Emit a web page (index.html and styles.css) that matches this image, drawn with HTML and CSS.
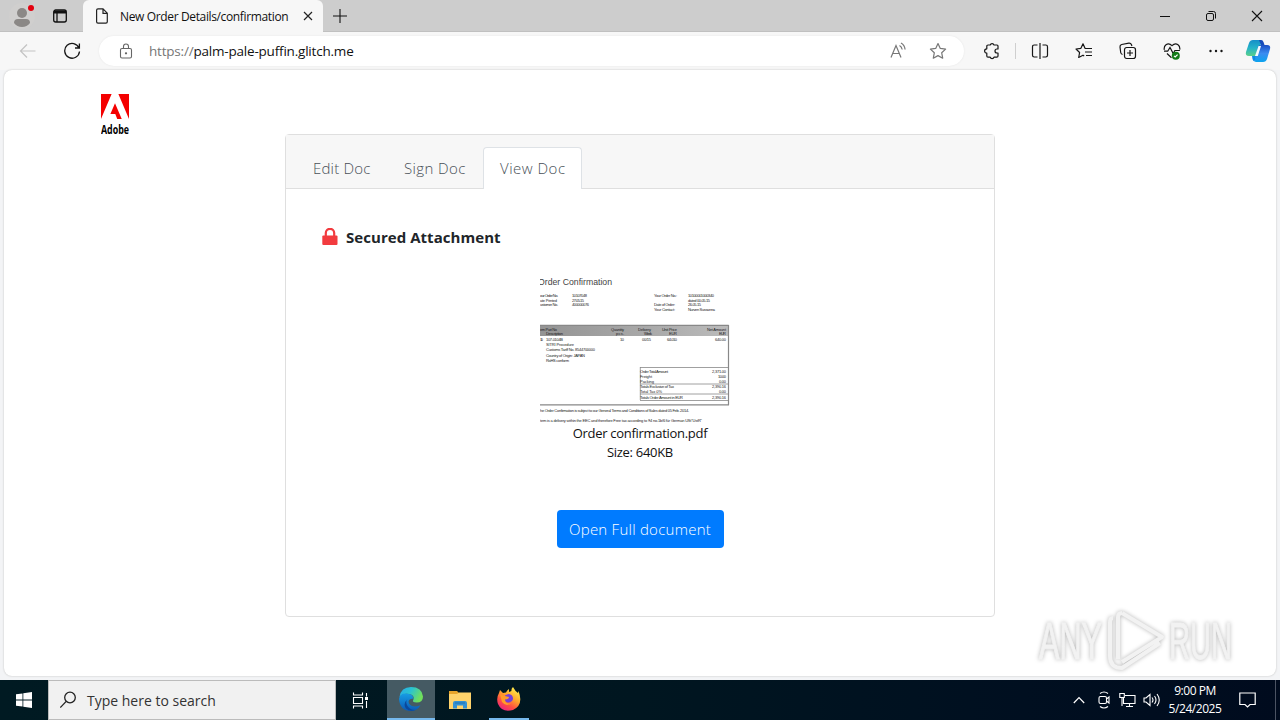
FILE: index.html
```html
<!DOCTYPE html>
<html lang="en">
<head>
<meta charset="utf-8">
<title>New Order Details/confirmation</title>
<link rel="stylesheet" href="styles.css">
</head>
<body>

<div class="tabstrip">
  <div class="profile">
    <svg width="44" height="32" viewBox="0 0 44 32"><circle cx="22" cy="16" r="13" fill="#d0cfce"/><circle cx="22" cy="13" r="5" fill="#8b8886"/><path d="M14 23q0-4 4-4h8q4 0 4 4q-3 4-8 4t-8-4z" fill="#8b8886"/><circle cx="31" cy="8" r="3" fill="#e3000f"/></svg>
  </div>
  <div class="workspace">
    <svg width="16" height="16" viewBox="0 0 16 16" fill="none" stroke="#111" stroke-width="1.3"><rect x="1.7" y="2" width="12.6" height="12" rx="2"/><path d="M2 4h12" stroke-width="3"/><path d="M5 5v9"/></svg>
  </div>
  <div class="tab">
    <svg width="14" height="16" viewBox="0 0 14 16" fill="none" stroke="#222" stroke-width="1.2"><path d="M3 .8h5l4.3 4.4v8.6q0 1.4-1.4 1.4H3q-1.4 0-1.4-1.4V2.2Q1.6 .8 3 .8zM8 1v4.3h4.3"/></svg>
    <span class="tabtitle">New Order Details/confirmation</span>
    <svg class="tabclose" width="10" height="10" viewBox="0 0 10 10" stroke="#222" stroke-width="1.2"><path d="M1 1l8 8M9 1l-8 8"/></svg>
  </div>
  <svg class="newtab" width="14" height="14" viewBox="0 0 14 14" stroke="#111" stroke-width="1.1"><path d="M7 0v14M0 7h14"/></svg>
  <div class="winbuttons">
    <svg width="46" height="32" viewBox="0 0 46 32" stroke="#111"><path d="M18 16.5h10"/></svg>
    <svg width="46" height="32" viewBox="0 0 46 32" fill="none" stroke="#111"><rect x="18.5" y="13.5" width="7" height="7" rx="1.5"/><path d="M20.5 11.5h5q2 0 2 2v5"/></svg>
    <svg width="46" height="32" viewBox="0 0 46 32" stroke="#111" stroke-width="1.1"><path d="M18 11l10 10M28 11l-10 10"/></svg>
  </div>
</div>

<div class="toolbar">
  <svg class="back" width="18" height="16" viewBox="0 0 18 16" fill="none" stroke="#c3c3c3" stroke-width="1.2"><path d="M16.5 8H1.5M8 1.5L1.5 8L8 14.5"/></svg>
  <svg class="reload" width="18" height="18" viewBox="0 0 18 18" fill="none" stroke="#161616" stroke-width="1.3"><path d="M16 6A7.4 7.4 0 1 0 16.5 9.5M16.4 1.5V6H12"/></svg>
  <div class="address">
    <svg class="padlock" width="14" height="16" viewBox="0 0 14 16" fill="none" stroke="#666" stroke-width="1.1"><rect x="1.5" y="5.5" width="11" height="9.5" rx="1.5"/><path d="M4.5 5.5V3.5a2.5 2.5 0 0 1 5 0v2"/><circle cx="7" cy="10.3" r=".6" fill="#666"/></svg>
    <span class="url"><span class="scheme">https://</span>palm-pale-puffin.glitch.me</span>
    <svg class="readaloud" width="18" height="18" viewBox="0 0 18 18" fill="none" stroke="#777" stroke-width="1.2"><path d="M2 15.5L7 3.5L12 15.5M3.8 11.5h6.5M10.5 3.5q2.2 1.2 2.7 4M12 1q3.6 2 4.1 6.5"/></svg>
    <svg class="star" width="18" height="18" viewBox="0 0 18 18" fill="none" stroke="#777" stroke-width="1.2" stroke-linejoin="round"><path d="M9 1.5l2.3 4.9 5.3.7-3.9 3.7 1 5.4L9 13.6l-4.7 2.6 1-5.4L1.4 7.100l5.3-.7z"/></svg>
  </div>
  <div class="tool ext"><svg width="18" height="18" viewBox="0 0 18 18" fill="none" stroke="#161616" stroke-width="1.2" stroke-linejoin="round"><path d="M5 3h2.200a2 2 0 0 1 3.800 0h3q1 0 1 1v3h-1a2 2 0 0 0 0 4h1v3q0 1.200-1.200 1.200H11a2 2 0 0 1-3.800 0H5q-1.200 0-1.200-1.200v-2.800a2.200 2.200 0 0 1 0-4.400V4.200Q3.800 3 5 3z"/></svg></div>
  <div class="separator"></div>
  <div class="tool"><svg width="18" height="18" viewBox="0 0 18 18" fill="none" stroke="#161616" stroke-width="1.2"><path d="M9 1v16M6.500 3H3.200q-1.700 0-1.700 1.700v8.600q0 1.700 1.700 1.700h3.300M11.500 3h3.300q1.700 0 1.700 1.700v8.600q0 1.700-1.700 1.700h-3.300"/></svg></div>
  <div class="tool"><svg width="18" height="18" viewBox="0 0 18 18" fill="none" stroke="#161616" stroke-width="1.2" stroke-linejoin="round"><path d="M12.500 6.500L10 6.300 8 1.800 5.900 6.300 1 7l3.600 3.500-.9 5L8 13.200l1.200.8M10 6.500h7M10 10h7M11 13.500h6"/></svg></div>
  <div class="tool"><svg width="18" height="18" viewBox="0 0 18 18" fill="none" stroke="#161616" stroke-width="1.2"><rect x="5.500" y="5.500" width="11" height="11" rx="2.200"/><path d="M11 8v6M8 11h6M3.500 12.500Q2 12 1.700 10.500L1 5q-.2-2 1.700-2.500L9.800 1.200q2-.2 2.700 1.500l.4 1.300"/></svg></div>
  <div class="tool"><svg width="18" height="18" viewBox="0 0 18 18" fill="none" stroke="#161616" stroke-width="1.2"><path d="M1.300 7.800Q.7 4.500 3 2.700q3-2 6 1 3-3 6-1 2.300 1.800 1.700 5M1 9.200h3.700L7 5.500l3.200 6 1.700-3h5M4 11.500l4.500 4.200"/><circle cx="12.800" cy="13.700" r="4" fill="#137b18" stroke="none"/><path d="M11 13.800l1.200 1.200 2.400-2.400" stroke="#fff"/></svg></div>
  <div class="tool"><svg width="16" height="4" viewBox="0 0 16 4" fill="#161616"><circle cx="2.500" cy="2" r="1.200"/><circle cx="8" cy="2" r="1.200"/><circle cx="13.500" cy="2" r="1.200"/></svg></div>
  <div class="copilot">
    <svg width="26" height="24" viewBox="0 0 26 24">
      <defs>
        <linearGradient id="cpa" x1="0" y1="0" x2="0" y2="1"><stop offset="0" stop-color="#168ec8"/><stop offset=".5" stop-color="#25b3c9"/><stop offset="1" stop-color="#5bd08a"/></linearGradient>
        <linearGradient id="cpb" x1="0" y1="0" x2="0" y2="1"><stop offset="0" stop-color="#1b4fc4"/><stop offset=".5" stop-color="#3b8cf0"/><stop offset="1" stop-color="#0ba4ee"/></linearGradient>
      </defs>
      <path d="M8 1h7q2 0 1.500 2L13 15q-.8 2-3 2H4q-4 0-3-4L4 4q1-3 4-3z" fill="url(#cpa)"/>
      <path d="M14 1h2q2 0 2.600 2.200L19.500 6H16z" fill="#174ab9"/>
      <path d="M18 23h-7q-2 0-1.500-2L13 8q.8-2 3-2h6q4 0 3 4l-3 10q-1 3-4 3z" fill="url(#cpb)"/>
      <path d="M13.500 7H16l-3.200 10H10z" fill="#f6fbff"/>
      <path d="M7 17h4l-1.500 5.600Q8 22.400 7.500 20z" fill="#0d8be5"/>
    </svg>
  </div>
</div>

<div class="page">
  <div class="logo">
    <svg width="28" height="26" viewBox="0 0 29 27" preserveAspectRatio="none" fill="#f40000"><path d="M0 0h11L0 26zM18 0h11v26zM14.500 9.500L21.500 26h-4.700l-2-5.200H9.700z"/></svg>
    <svg width="30" height="20" viewBox="0 0 30 20"><text class="logotext" x="0" y="13.500" textLength="28" lengthAdjust="spacingAndGlyphs">Adobe</text></svg>
  </div>

  <div class="card">
    <div class="cardheader">
      <a class="navlink edit">Edit Doc</a>
      <a class="navlink sign">Sign Doc</a>
      <a class="navlink active">View Doc</a>
    </div>
    <div class="cardbody">
      <div class="secured">
        <svg width="16" height="18" viewBox="0 0 16 18"><path d="M3.800 8V5a4.200 4.200 0 0 1 8.400 0v3" fill="none" stroke="#f23b3f" stroke-width="2.200"/><rect x=".3" y="7.500" width="15.200" height="9.500" rx="1" fill="#f23b3f"/></svg>
        <b>Secured Attachment</b>
      </div>
      <svg class="preview" width="200" height="150" viewBox="540 275 200 150">
        <defs><linearGradient id="bar" x1="0" y1="0" x2="1" y2="0"><stop offset="0" stop-color="#939393"/><stop offset=".6" stop-color="#aaa"/><stop offset="1" stop-color="#bbb"/></linearGradient></defs>
        <text class="doctitle" x="538" y="285" textLength="74" lengthAdjust="spacingAndGlyphs">Order Confirmation</text>
        <g class="doc">
          <text x="540" y="297.300" textLength="18">our Order No.</text><text x="572" y="297.300" textLength="15">10107048</text>
          <text x="540" y="301.800" textLength="17">ate Printed</text><text x="572" y="301.800" textLength="12">27.05.15</text>
          <text x="540" y="306.300" textLength="18">ustomer No.</text><text x="572" y="306.300" textLength="17">400000076</text>
          <text x="654" y="297.300" textLength="23">Your Order No.:</text><text x="688" y="297.300" textLength="26">10100001000340</text>
          <text x="688" y="301.800" textLength="22">dated 00.05.15</text>
          <text x="654" y="306.300" textLength="21">Date of Order:</text><text x="688" y="306.300" textLength="13">26.05.15</text>
          <text x="654" y="311" textLength="21">Your Contact:</text><text x="688" y="311" textLength="27">Nurven Sussanna</text>
          <rect x="538" y="325" width="190.500" height="11" fill="url(#bar)"/>
          <path d="M538 325.300h190.700M728.500 325v80M538 404.800h191" fill="none" stroke="#888" stroke-width="1.200"/>
          <text x="540" y="330.500" textLength="17">em Part No</text><text x="611" y="330.500" textLength="13">Quantity</text><text x="638" y="330.500" textLength="13">Delivery</text><text x="662" y="330.500" textLength="15">Unit Price</text><text x="707" y="330.500" textLength="19">Net Amount</text>
          <text x="546" y="335.300" textLength="17">Description</text><text x="616" y="335.300" textLength="8">pcs.</text><text x="644" y="335.300" textLength="8">Week</text><text x="669" y="335.300" textLength="8">EUR</text><text x="719" y="335.300" textLength="7">EUR</text>
          <text x="540" y="341" textLength="3">10</text><text x="546" y="341" textLength="17">107-0104B</text><text x="620" y="341" textLength="4">10</text><text x="642" y="341" textLength="9">00/15</text><text x="667" y="341" textLength="10">64.010</text><text x="715" y="341" textLength="11">640.00</text>
          <text x="546" y="346.300" textLength="28">SITRI Procedure</text>
          <text x="546" y="351.300" textLength="49">Customs Tariff No. 8544700000</text>
          <text x="546" y="356.600" textLength="39">Country of Origin: JAPAN</text>
          <text x="546" y="361.500" textLength="23">RoHS conform</text>
          <path d="M640 367.500h88M640 384h88M640 394h88M640 400.500h88M640.300 367v33" fill="none" stroke="#888" stroke-width=".8"/>
          <text x="640" y="372.500" textLength="28">Order Total Amount</text><text x="712" y="372.500" textLength="14">2,371.00</text>
          <text x="640" y="377.800" textLength="12">Freight</text><text x="718" y="377.800" textLength="8">10.00</text>
          <text x="640" y="382.600" textLength="14">Packing</text><text x="719" y="382.600" textLength="7">0.00</text>
          <text x="640" y="388" textLength="34">Totals Exclusive of Tax</text><text x="712" y="388" textLength="14">2,390.16</text>
          <text x="640" y="393" textLength="22">Total Tax 0%</text><text x="719" y="393" textLength="7">0.00</text>
          <text x="640" y="398.800" textLength="43">Totals Order Amount in EUR</text><text x="712" y="398.800" textLength="14">2,390.16</text>
          <text x="540" y="411.700" textLength="149">he Order Confirmation is subject to our General Terms and Conditions of Sales dated 05 Feb. 2014.</text>
          <text x="540" y="421.500" textLength="162">tem is a delivery within the EEC and therefore Free tax according to §4 no.1b/6 für German USt"UstR"</text>
        </g>
      </svg>
      <div class="filename">Order confirmation.pdf</div>
      <div class="filesize">Size: 640KB</div>
      <a class="btn"><span>Open Full document</span></a>
    </div>
  </div>

  <svg class="watermark" width="210" height="72" viewBox="1030 605 210 72">
    <g class="marktext"><text x="1039" y="659" textLength="63" lengthAdjust="spacingAndGlyphs">ANY</text><text x="1169" y="659" textLength="63" lengthAdjust="spacingAndGlyphs">RUN</text></g>
    <g class="markplay"><path d="M1122 613L1162 637L1122 662M1122 613q-4 0-4 4v42M1113 618q-3 0-3 4v34q0 12 12 12l38-25"/></g>
  </svg>
</div>

<div class="taskbar">
  <div class="start"><svg width="16" height="16" viewBox="0 0 16 16" fill="#fff"><path d="M0 2.300L6.500 1.400v6.200H0zM7.300 1.300L16 0v7.600H7.300zM0 8.400h6.500v6.200L0 13.700zM7.300 8.400H16V16l-8.700-1.300z"/></svg></div>
  <div class="search">
    <svg width="17" height="18" viewBox="0 0 17 18" fill="none" stroke="#222" stroke-width="1.3"><circle cx="10" cy="6.500" r="5.300"/><path d="M6.200 10.400L.3 16.500"/></svg>
    <span>Type here to search</span>
  </div>
  <div class="app taskview"><svg width="17" height="17" viewBox="0 0 17 17" fill="none" stroke="#fff" stroke-width="1.1"><path d="M1.500.5v2.500h9V.5M1.500 16.500V14h9v2.500M1.500 5.500h9v6h-9zM14.500 1v3.500M14.500 9v7"/><path d="M13 5h3v3h-3z" fill="#fff" stroke="none"/></svg></div>
  <div class="app current">
    <svg width="24" height="24" viewBox="0 0 24 24">
      <defs>
        <linearGradient id="ea" x1="0" y1="0" x2="1" y2=".4"><stop offset="0" stop-color="#28a9e8"/><stop offset=".5" stop-color="#2ac3d1"/><stop offset="1" stop-color="#70df5c"/></linearGradient>
        <linearGradient id="eb" x1="0" y1="0" x2="0" y2="1"><stop offset="0" stop-color="#179de4"/><stop offset="1" stop-color="#0b59b5"/></linearGradient>
      </defs>
      <path d="M.5 10Q2 0 12 0q11 0 12 9.500 0 6-6.300 6-5.200 0-3.300-2.700Q16 8 10 7Q4 6 .5 10z" fill="url(#ea)"/>
      <path d="M0 12Q1 6 7 6.500q7 .2 7.500 5Q8 12 10 16.500q3.500 5 11.500 1.700Q18 24 12 24 1 24 0 12z" fill="url(#eb)"/>
      <path d="M8.500 12Q6 15 8.500 19q3 4.500 8 4Q11 25 7 21.500 3.500 17 8.500 12z" fill="#0b489b"/>
    </svg>
  </div>
  <div class="app files">
    <svg width="22" height="20" viewBox="0 0 22 20"><path d="M0 1h8l2 2h11v16H0z" fill="#e8a52b"/><path d="M0 4h8l2-1.500h12V19H0z" fill="#ffd36b"/><path d="M4 18.500V13q0-2 2-2h10q2 0 2 2v5.500h-4v-3H8v3z" fill="#3592d4"/><path d="M6 13h10" stroke="#2272b0"/></svg>
  </div>
  <div class="app running">
    <svg width="24" height="24" viewBox="0 0 24 24">
      <defs><linearGradient id="fx" x1=".8" y1="0" x2=".2" y2="1"><stop offset="0" stop-color="#fff34f"/><stop offset=".4" stop-color="#ffa72b"/><stop offset=".7" stop-color="#ff4e42"/><stop offset="1" stop-color="#e81d88"/></linearGradient></defs>
      <path d="M2 6l1-3 3 3 3-.5Q10 3 12 2v3l2.500-1Q14 2 16 0q2 4 5 6l.5-2Q27 18 16 23 5 26 1 17-1 11 2 6z" fill="url(#fx)"/>
      <path d="M8 8.500q4-3 7 0 2 3 0 5.500-4 3-7 0z" fill="#7440d8"/><path d="M3 7l5 2 4 1q0 2-4 2.500Q8 17 14 16.500 9 20 5 15z" fill="#ff9c29"/>
    </svg>
  </div>
  <div class="tray">
    <svg width="12" height="8" viewBox="0 0 12 8" fill="none" stroke="#fff" stroke-width="1.2"><path d="M.8 7L6 1.500 11.200 7"/></svg>
    <svg class="meet" width="14" height="18" viewBox="0 0 14 18" fill="none" stroke="#fff" stroke-width="1.1"><rect x="2" y="5.500" width="7.500" height="7" rx="1.500"/><path d="M9.500 8l2.500-2v6L9.500 10M3 2.500q4-3 8 0M3 15.500q4 3 8 0"/></svg>
    <svg class="network" width="17" height="16" viewBox="0 0 17 16" fill="none" stroke="#fff" stroke-width="1.1"><path d="M6 3.500h10v8H4.500V6M7 14.500h7M10.500 11.500v3M.8 1.500h4.500v4H.8zM3 5.500V14"/></svg>
    <svg class="volume" width="17" height="16" viewBox="0 0 17 16" fill="none" stroke="#fff" stroke-width="1.1"><path d="M1 6h2l4-3.500v11L3 10H1zM9 5.500q2 2.500 0 5M11.500 4q3 4 0 8M14 2q4.500 6 0 12"/></svg>
    <div class="clock"><span>9:00 PM</span><span class="date">5/24/2025</span></div>
    <svg class="notify" width="17" height="17" viewBox="0 0 17 17" fill="none" stroke="#fff" stroke-width="1.2"><path d="M.8 1h15.400v11.500H11L8.500 15 6 12.500H.8z"/></svg>
    <div class="desktop"></div>
  </div>
</div>

</body>
</html>
```

FILE: styles.css
```css
* {
  box-sizing: border-box;
}

body {
  margin: 0;
  width: 1280px;
  height: 720px;
  overflow: hidden;
  display: flex;
  flex-direction: column;
  background: #f3f4f6;
  font-family: "Open Sans", "Noto Sans", sans-serif;
  color: #111;
}

svg {
  display: block;
  flex: none;
}

/* Browser tabs */
.tabstrip {
  height: 32px;
  display: flex;
  align-items: center;
  background: #cdcdcd;
  border-bottom: 1px solid #c0c0c0;
}

.workspace {
  margin-left: 8px;
  width: 31px;
}

.tab {
  width: 240px;
  height: 32px;
  padding-left: 12px;
  display: flex;
  align-items: center;
  background: #f7f7f7;
  border-radius: 6px 6px 0 0;
  align-self: flex-start;
}

.tabtitle {
  width: 170px;
  margin-left: 11px;
  font-size: 12px;
  letter-spacing: -0.36px;
  white-space: nowrap;
}

.tabclose {
  margin-left: 13px;
}

.newtab {
  margin-left: 10px;
}

.winbuttons {
  margin-left: auto;
  display: flex;
}

/* Address row */
.toolbar {
  height: 38px;
  flex: none;
  display: flex;
  align-items: center;
  background: #f7f7f7;
}

.back {
  margin-left: 19px;
}

.reload {
  margin-left: 26px;
}

.address {
  width: 865px;
  height: 30px;
  margin-left: 18px;
  padding-left: 20px;
  display: flex;
  align-items: center;
  border-radius: 15px;
  background: #fff;
  box-shadow: 0 0 2px #e4e4e4;
}

.url {
  margin-left: 16px;
  width: 740px;
  font-size: 13.5px;
  letter-spacing: -0.2px;
}

.scheme {
  color: #767676;
}

.star {
  margin-left: 22px;
}

.tool {
  width: 44px;
  display: flex;
  justify-content: center;
}

.ext {
  margin-left: 6px;
}

.separator {
  width: 1px;
  height: 16px;
  margin: 0 2px 0 1px;
  background: #cfcfcf;
}

.copilot {
  margin-left: 7px;
}

/* Web page */
.page {
  position: relative;
  width: 1272px;
  height: 606px;
  margin: 0 4px 4px;
  flex: none;
  display: flex;
  align-items: flex-start;
  background: #fff;
  border-radius: 8px;
  box-shadow: 0 0 2px #bbb;
}

.logo {
  width: 30px;
  margin: 24px 0 0 97px;
}

.logotext {
  font: bold 12px "Open Sans", sans-serif;
}

.card {
  width: 710px;
  height: 483px;
  margin: 64px 0 0 154px;
  border: 1px solid #dfdfdf;
  border-radius: 4px;
}

.cardheader {
  height: 54px;
  padding: 12px 0 0 10px;
  display: flex;
  background: #f7f7f7;
  border-bottom: 1px solid #dfdfdf;
}

.navlink {
  height: 42px;
  padding: 8px 0 0 16px;
  border: 1px solid transparent;
  border-bottom: none;
  border-radius: 4px 4px 0 0;
  font-size: 15px;
  font-weight: 300;
  line-height: 24px;
  letter-spacing: 0.2px;
  color: #495057;
  white-space: nowrap;
}

.edit {
  width: 91px;
}

.sign {
  width: 96px;
  letter-spacing: 0.4px;
}

.active {
  width: 99px;
  letter-spacing: 0.5px;
  background: #fff;
  border-color: #dee2e6;
}

.cardbody {
  display: flex;
  flex-direction: column;
  align-items: center;
}

.secured {
  width: 638px;
  height: 24px;
  margin-top: 36px;
  padding-left: 1px;
  display: flex;
  align-items: center;
  gap: 8px;
  font-size: 15px;
  letter-spacing: 0.05px;
  color: #212529;
}

.preview {
  margin-top: 26px;
}

.doctitle {
  font: 9.5px "Liberation Sans", sans-serif;
  fill: #444;
}

.doc text {
  font: 4px "Liberation Sans", sans-serif;
  fill: #222;
}

.filename, .filesize {
  font-size: 13px;
  line-height: 19px;
  letter-spacing: -0.3px;
  white-space: nowrap;
}

.filename {
  margin-top: -1px;
}

.btn {
  width: 167px;
  height: 38px;
  margin-top: 48px;
  display: flex;
  align-items: center;
  justify-content: center;
  border-radius: 4px;
  background: #007bff;
  color: #fff;
  font-size: 15px;
  font-weight: 300;
  letter-spacing: 0.25px;
  white-space: nowrap;
}

/* Overlay mark in the corner of the page */
.watermark {
  position: absolute;
  right: 36px;
  bottom: -1px;
  filter: drop-shadow(0 0 2px #b5b5b5);
}

.marktext {
  font: 52px "Liberation Sans", sans-serif;
  fill: #f2f2f2;
  stroke: #f2f2f2;
  stroke-width: 1;
}

.markplay {
  fill: none;
  stroke: #f2f2f2;
  stroke-width: 4;
  stroke-linejoin: round;
}

/* Windows taskbar */
.taskbar {
  height: 40px;
  flex: none;
  display: flex;
  background: linear-gradient(90deg, #001a22, #001620 50%, #000f20 80%, #000b1e);
  color: #fff;
}

.start {
  width: 48px;
  display: flex;
  align-items: center;
  justify-content: center;
}

.search {
  width: 288px;
  padding-left: 11px;
  display: flex;
  align-items: center;
  gap: 10px;
  background: #f1f1f1;
  border: 1px solid #bbb;
  color: #333;
  font-size: 14px;
}

.app {
  width: 48px;
  display: flex;
  align-items: center;
  justify-content: center;
}

.taskview {
  width: 51px;
  padding-right: 3px;
}

.current {
  background: #455a63;
  border-bottom: 2px solid #76b9ed;
}

.files {
  width: 50px;
}

.running {
  width: 40px;
  margin-left: 4px;
  border-bottom: 2px solid #76b9ed;
}

.tray {
  width: 207px;
  margin-left: auto;
  display: flex;
  align-items: center;
}

.meet {
  margin-left: 12px;
}

.network {
  margin-left: 8px;
}

.volume {
  margin-left: 7px;
}

.clock {
  width: 60px;
  margin-left: 5px;
  display: flex;
  flex-direction: column;
  align-items: center;
  font-size: 12px;
  line-height: 18px;
  letter-spacing: -0.45px;
  white-space: nowrap;
}

.notify {
  margin-left: 14px;
}

/* Thin strip that shows the desktop */
.desktop {
  width: 1px;
  height: 40px;
  margin-left: 19px;
  background: #4b5363;
}
```
